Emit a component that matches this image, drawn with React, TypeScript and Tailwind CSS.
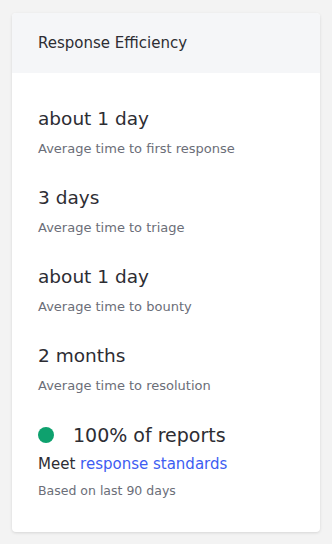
import React from "react";

const stats = [
  { value: "about 1 day", label: "Average time to first response" },
  { value: "3 days", label: "Average time to triage" },
  { value: "about 1 day", label: "Average time to bounty" },
  { value: "2 months", label: "Average time to resolution" },
];

export default function App() {
  return (
    <div
      className="min-h-[544px] bg-[#f3f3f3] px-3 pt-[13px]"
      style={{ fontFamily: "'DejaVu Sans', 'Noto Sans', sans-serif" }}
    >
      <div className="w-[308px] overflow-hidden rounded bg-white shadow-[0_1px_3px_rgba(0,0,0,0.12)]">
        {/* Header */}
        <div className="flex h-[60px] items-center bg-[#f5f6f8] px-[26px]">
          <h2 className="text-[15px] text-[#2d2d33]">Response Efficiency</h2>
        </div>

        {/* Stats */}
        <div className="flex flex-col gap-[25px] px-[26px] pb-[32px] pt-8">
          {stats.map((s, i) => (
            <div key={i} className="flex flex-col gap-[6px]">
              <div className="text-[18.5px] leading-[28px] text-[#2d2d33]">{s.value}</div>
              <div className="text-[13px] leading-5 text-[#6b6e78]">{s.label}</div>
            </div>
          ))}

          <div className="flex flex-col">
            <div className="flex h-[28px] items-center gap-[19px]">
              <span className="h-4 w-4 rounded-full bg-[#0ea16e]" />
              <span className="text-[19px] leading-[28px] text-[#2d2d33]">100% of reports</span>
            </div>
            <div className="mt-[5px] text-[15px] leading-5 text-[#2d2d33]">
              Meet <a className="text-[#3d5df2]">response standards</a>
            </div>
            <div className="mt-[8px] text-[12.5px] leading-[18px] text-[#6b6e78]">
              Based on last 90 days
            </div>
          </div>
        </div>
      </div>
    </div>
  );
}
